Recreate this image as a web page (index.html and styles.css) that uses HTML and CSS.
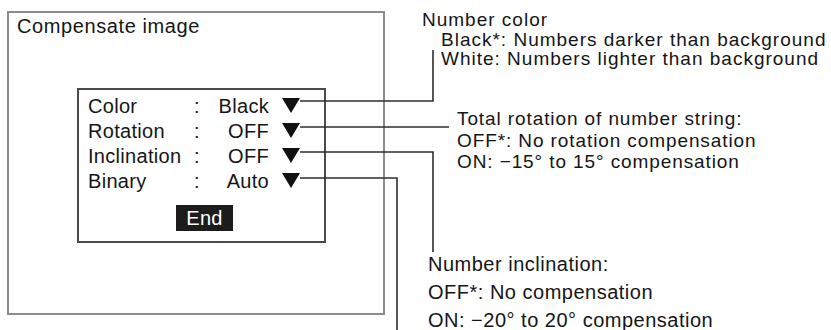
FILE: index.html
```html
<!DOCTYPE html>
<html lang="en">
<head>
    <meta charset="UTF-8">
    <meta name="viewport" content="width=device-width, initial-scale=1.0">
    <title>Compensate image</title>
    <link rel="stylesheet" href="styles.css">
</head>
<body>
    <div class="sheet">
        <div class="window">
            <div class="window-title">Compensate image</div>
            <div class="dialog">
                <div class="rows">
                    <span class="label">Color</span><span class="colon">:</span><span class="value">Black</span>
                    <span class="arrow"><svg width="18" height="15" viewBox="0 0 18 15"><polygon points="0,0 18,0 9,15"/></svg></span>

                    <span class="label">Rotation</span><span class="colon">:</span><span class="value">OFF</span>
                    <span class="arrow"><svg width="18" height="15" viewBox="0 0 18 15"><polygon points="0,0 18,0 9,15"/></svg></span>

                    <span class="label">Inclination</span><span class="colon">:</span><span class="value">OFF</span>
                    <span class="arrow"><svg width="18" height="15" viewBox="0 0 18 15"><polygon points="0,0 18,0 9,15"/></svg></span>

                    <span class="label">Binary</span><span class="colon">:</span><span class="value">Auto</span>
                    <span class="arrow"><svg width="18" height="15" viewBox="0 0 18 15"><polygon points="0,0 18,0 9,15"/></svg></span>
                </div>
                <div class="end-btn">End</div>
            </div>
        </div>

        <!-- leader lines from each setting to its note -->
        <svg class="leaders" width="831" height="330" viewBox="0 0 831 330">
            <path d="M300 101 H433 V50"/>
            <path d="M300 127 H449"/>
            <path d="M300 152 H433 V252"/>
            <path d="M300 178 H397 V330"/>
        </svg>

        <div class="note note-color">
            <div>Number color</div>
            <div class="sub">Black*: Numbers darker than background</div>
            <div class="sub">White: Numbers lighter than background</div>
        </div>

        <div class="note note-rotation">
            <div>Total rotation of number string:</div>
            <div>OFF*: No rotation compensation</div>
            <div>ON: &minus;15&deg; to 15&deg; compensation</div>
        </div>

        <div class="note note-incline">
            <div>Number inclination:</div>
            <div>OFF*: No compensation</div>
            <div>ON: &minus;20&deg; to 20&deg; compensation</div>
        </div>
    </div>
</body>
</html>
```

FILE: styles.css
```css
body {
    margin: 0;
    background: #fff;
    font-family: "Liberation Sans", Arial, Helvetica, sans-serif;
    color: #151515;
}
.sheet {
    position: relative;
    width: 831px;
    height: 330px;
    padding: 11px 0 0 7px;
    box-sizing: border-box;
    overflow: hidden;
}
.window {
    width: 378px;
    height: 304px;
    border: 2px solid #8c8c8c;
    box-sizing: border-box;
}
.window-title {
    padding: 1px 0 0 8px;
    font-size: 20px;
    line-height: 24px;
    letter-spacing: 0.6px;
}
.dialog {
    margin: 50px 0 0 68px;
    width: 249px;
    height: 155px;
    border: 2px solid #4a4a4a;
    box-sizing: border-box;
    padding: 4px 0 0 9px;
}
.rows {
    display: grid;
    grid-template-columns: 106px 10px 65px 31px;
    font-size: 20px;
    line-height: 25px;
    letter-spacing: 0.3px;
}
.value {
    text-align: right;
}
.arrow {
    padding-left: 13px;
}
.arrow svg {
    vertical-align: baseline;
    fill: #111;
}
.end-btn {
    margin: 11px 0 0 88px;
    width: 57px;
    height: 26px;
    background: #1c1c1c;
    color: #fff;
    font-size: 20px;
    line-height: 26px;
    text-align: center;
    letter-spacing: 0.3px;
}
.leaders {
    position: absolute;
    left: 0;
    top: 0;
    pointer-events: none;
}
.leaders path {
    fill: none;
    stroke: #2e2e2e;
    stroke-width: 1.6;
}
.note {
    position: absolute;
    white-space: nowrap;
}
.note-color {
    left: 422px;
    top: 10px;
    font-size: 19px;
    line-height: 19.5px;
    letter-spacing: 1px;
}
.note-color .sub {
    padding-left: 19px;
}
.note-rotation {
    left: 457px;
    top: 108px;
    font-size: 19px;
    line-height: 21.5px;
    letter-spacing: 0.9px;
}
.note-incline {
    left: 428px;
    top: 250px;
    font-size: 20px;
    line-height: 28px;
    letter-spacing: 0.5px;
}
```
